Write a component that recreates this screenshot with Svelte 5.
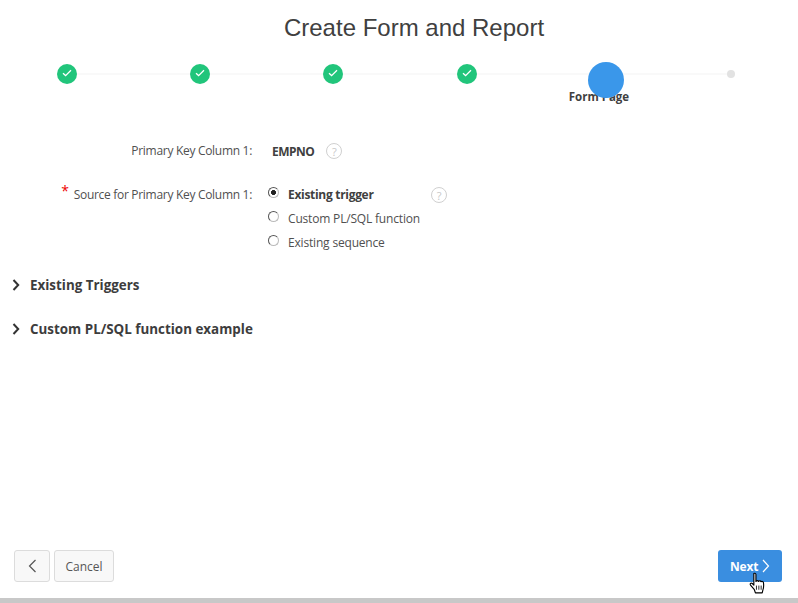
<script>
  const done = [1, 2, 3, 4];
  const radios = [
    { label: 'Existing trigger', checked: true },
    { label: 'Custom PL/SQL function', checked: false },
    { label: 'Existing sequence', checked: false }
  ];
  const regions = ['Existing Triggers', 'Custom PL/SQL function example'];
</script>

{#snippet help()}
  <span class="help">?</span>
{/snippet}

<div class="page">
  <main class="main">
    <h1>Create Form and Report</h1>

    <div class="steps">
      <div class="track"></div>
      {#each done as d (d)}
        <div class="step">
          <span class="check">
            <svg width="10" height="8" viewBox="0 0 10 8"><path d="M1 4.2 3.6 6.6 9 1.2" fill="none" stroke="#fff" stroke-width="1.3"/></svg>
          </span>
        </div>
      {/each}
      <div class="step current">
        <span class="blob"></span>
        <span class="step-label">Form Page</span>
      </div>
      <div class="step last"><span class="dot"></span></div>
    </div>

    <div class="form">
      <div class="row first">
        <div class="label">Primary Key Column 1:</div>
        <strong class="value">EMPNO</strong>
        {@render help()}
      </div>
      <div class="row second">
        <div class="label"><span class="req">*</span>Source for Primary Key Column 1:</div>
        <div class="radios">
          {#each radios as r (r.label)}
            <label class="radio">
              <span class="ring" class:on={r.checked}></span>
              <span class:sel={r.checked}>{r.label}</span>
            </label>
          {/each}
        </div>
        <div class="help2">{@render help()}</div>
      </div>
    </div>

    <div class="regions">
      {#each regions as title (title)}
        <div class="region">
          <svg width="8" height="12" viewBox="0 0 8 12"><path d="M1.500 1 6.200 6 1.500 11" fill="none" stroke="#333" stroke-width="2"/></svg>
          <span>{title}</span>
        </div>
      {/each}
    </div>
  </main>

  <footer class="footer">
    <div class="left">
      <button class="btn icon" aria-label="Previous">
        <svg width="9" height="14" viewBox="0 0 9 14"><path d="M7.500 1 1.500 7l6 6" fill="none" stroke="#555" stroke-width="1.200"/></svg>
      </button>
      <button class="btn cancel">Cancel</button>
    </div>
    <button class="btn next">
      Next
      <svg width="8" height="14" viewBox="0 0 8 14"><path d="M1 1l5.500 6L1 13" fill="none" stroke="#fff" stroke-width="1.200"/></svg>
      <svg class="cursor" width="19" height="24" viewBox="0 0 17 23">
        <path d="M5 1.500c1-.8 2 0 2 1v6.500c.5-1 2-1 2.500 0 .5-.8 2-.8 2.500.3.600-.6 2-.3 2.200.8.300 2 .2 5-.5 7l-.7 2.900H6.500L5.500 17 1.800 12.500c-.8-1.200.5-2.500 1.700-1.500L5 12.500z" fill="#fff" stroke="#000" stroke-width="1.100" stroke-linejoin="round"/>
        <path d="M7.500 13v4M9.800 13v4M12 13v4" stroke="#000" stroke-width=".8"/>
      </svg>
    </button>
  </footer>
  <div class="strip"></div>
</div>

<style>
  :global(body) {
    margin: 0;
    background: #fff;
  }
  .page {
    width: 798px;
    height: 603px;
    display: flex;
    flex-direction: column;
    font-family: "Open Sans", "Noto Sans", sans-serif;
    color: #404040;
    overflow: hidden;
  }
  .main {
    flex: 1;
  }
  h1 {
    margin: 0;
    padding-top: 14px;
    padding-right: 0;
    padding-left: 30px;
    font: 400 24px/28px "Liberation Sans", Arial, sans-serif;
    color: #404040;
    text-align: center;
  }
  .steps {
    position: relative;
    display: flex;
    margin-top: 22px;
    padding-left: 57px;
    height: 50px;
  }
  .track {
    position: absolute;
    left: 67px;
    width: 664px;
    top: 9px;
    height: 2px;
    background: #f9f9f9;
  }
  .step {
    position: relative;
    width: 133.200px;
    flex: none;
  }
  .check {
    position: relative;
    display: flex;
    align-items: center;
    justify-content: center;
    width: 20px;
    height: 20px;
    border-radius: 50%;
    background: #21c57b;
  }
  .check svg {
    margin-top: -2px;
  }
  .current .blob {
    position: absolute;
    left: -2px;
    top: -2px;
    width: 36px;
    height: 36px;
    border-radius: 50%;
    background: #3a97ea;
    z-index: 1;
  }
  .step-label {
    position: absolute;
    left: -21px;
    top: 25px;
    font-size: 11.500px;
    line-height: 16px;
    font-weight: 700;
    white-space: nowrap;
    color: #404040;
  }
  .last .dot {
    position: absolute;
    left: 4px;
    top: 6px;
    width: 8px;
    height: 8px;
    border-radius: 50%;
    background: #e2e2e2;
  }
  .form {
    margin-top: 27px;
    font-size: 12px;
  }
  .row {
    display: flex;
  }
  .row.first {
    align-items: center;
    height: 20px;
  }
  .row.second {
    margin-top: 24px;
    align-items: flex-start;
  }
  .label {
    width: 252px;
    flex: none;
    text-align: right;
    line-height: 20px;
    color: #505050;
    letter-spacing: -0.3px;
  }
  .req {
    color: #e00;
    font-size: 14px;
    line-height: 10px;
    margin-right: 5px;
    position: relative;
    top: -3px;
  }
  .value {
    margin-left: 20px;
    margin-right: 12px;
    color: #404040;
    letter-spacing: -0.5px;
  }
  .help {
    display: flex;
    align-items: center;
    justify-content: center;
    box-sizing: border-box;
    width: 16px;
    height: 16px;
    border: 1px solid #d0d0d0;
    border-radius: 50%;
    color: #c8c8c8;
    font-size: 11px;
  }
  .radios {
    display: flex;
    flex-direction: column;
    gap: 4px;
    margin-left: 16px;
    width: 163px;
  }
  .radio {
    display: flex;
    height: 20px;
    line-height: 20px;
    color: #505050;
    letter-spacing: -0.18px;
  }
  .ring {
    box-sizing: border-box;
    flex: none;
    width: 11px;
    height: 11px;
    margin-top: 2px;
    margin-right: 9px;
    margin-left: 0;
    border: 1px solid #555;
    border-bottom-color: #bbb;
    border-right-color: #bbb;
    border-radius: 50%;
    background: #fff;
  }
  .ring.on {
    background: radial-gradient(circle, #222 0 2.200px, #fff 2.700px);
  }
  .sel {
    font-weight: 700;
    color: #404040;
    letter-spacing: -0.3px;
  }
  .help2 {
    padding-top: 2px;
  }
  .regions {
    margin-top: 22px;
    padding-left: 12px;
  }
  .region {
    display: flex;
    align-items: center;
    gap: 10px;
    height: 20px;
    margin-bottom: 24px;
    font-size: 13.400px;
    font-weight: 700;
    color: #3d3d3d;
  }
  .footer {
    display: flex;
    justify-content: space-between;
    padding: 0 16px 0 14px;
    margin-bottom: 16px;
  }
  .left {
    display: flex;
    gap: 4px;
  }
  .btn {
    box-sizing: border-box;
    height: 32px;
    padding: 0 11px;
    border: 1px solid #dcdcdc;
    border-radius: 3px;
    background: #f8f8f8;
    font: 12px "Open Sans", "Noto Sans", sans-serif;
    color: #555;
  }
  .cancel {
    width: 60px;
    padding: 0;
  }
  .icon {
    width: 36px;
    padding: 0;
    display: flex;
    align-items: center;
    justify-content: center;
  }
  .next {
    position: relative;
    display: flex;
    align-items: center;
    gap: 4px;
    width: 64px;
    padding: 0 0 0 12px;
    border: 0;
    background: #3a8ee0;
    color: #fff;
    font-weight: 700;
    letter-spacing: -0.2px;
  }
  .cursor {
    position: absolute;
    left: 30px;
    top: 22px;
  }
  .strip {
    flex: none;
    height: 5px;
    background: #c8c8c8;
  }
</style>
